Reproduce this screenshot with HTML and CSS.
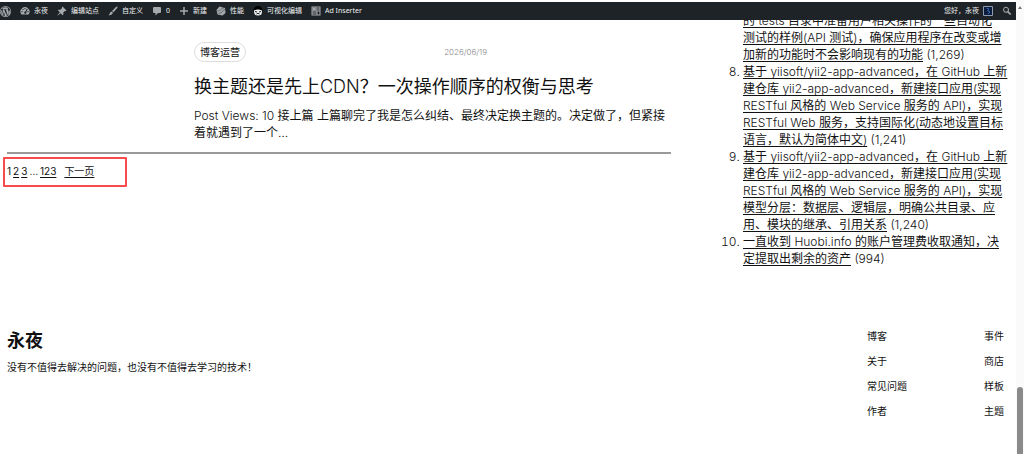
FILE: index.html
```html
<!DOCTYPE html>
<html lang="zh-CN">
<head>
<meta charset="utf-8">
<title>永夜</title>
<link rel="stylesheet" href="styles.css">
</head>
<body>
<div class="window">
<div class="page">
  <nav class="adminbar" aria-label="工具栏">
    <a class="item item-logo" href="#" aria-label="WordPress"><svg class="icon" viewBox="0 0 20 20"><path fill-rule="evenodd" d="M10 0a10 10 0 1 1 0 20a10 10 0 0 1 0-20zm0 1.200a8.800 8.800 0 1 0 0 17.600a8.800 8.800 0 0 0 0-17.600zM2.800 6.800l4 10.700A8 8 0 0 1 2.800 6.800zM3.500 5.500A8 8 0 0 1 15.300 4c-2 .4-1.500 2.200-.4 3.800c1.400 2.200.6 4.200 0 6.100l-1 2.800L10.700 7l1.300-.2V6H6.700v.8l1.300.2 1.400 3.800-2 5.700L4.500 7l1.200-.2V5.500zM10.200 11l2.600 6.800q-2.300.8-4.800.2zM17.200 6.500a8 8 0 0 1-3 10.500l2.500-7q.6-2 .5-3.500z"/></svg></a>
    <a class="item" href="#"><svg class="icon" viewBox="0 0 20 20"><path fill-rule="evenodd" d="M3 17a9 9 0 1 1 14 0zM9 4h2v2.500H9zM4.500 6.500l1.500-1 1.500 1.800L6 8.500zM2.800 10.500h2.500v2H2.800zM14.700 10.500h2.500v2h-2.500zM13.500 5.500L11 11a2.200 2.200 0 1 0 1.500 1l3-5.500z"/></svg>永夜</a>
    <a class="item" href="#"><svg class="icon" viewBox="0 0 20 20"><path d="M11 1l8 8-1.500 1.200-1.500-.4-3.500 3.400.3 3.800-1.500 1.300-4-4L1.500 19 1 18.500l4.700-5.800-4-4L3 7.300l3.800.3 3.400-3.500-.5-1.600z"/></svg>编辑站点</a>
    <a class="item" href="#"><svg class="icon" viewBox="0 0 20 20"><path d="M18.500 1.200c1 .8.400 2-.5 3.200l-7 8.100-3-2.600 7.500-7.500c1-1 2-2 3-1.200zM6.800 11l3 2.600c-.5 3.700-4.300 5-8.800 4.700 2.700-1.200 2.200-5.500 5.800-7.300z"/></svg>自定义</a>
    <a class="item" href="#" aria-label="0 条评论"><svg class="icon" viewBox="0 0 20 20"><path d="M4 2h12q2 0 2 2v8q0 2-2 2h-4l-5 5v-5H4q-2 0-2-2V4q0-2 2-2z"/></svg>0</a>
    <a class="item" href="#"><svg class="icon" viewBox="0 0 20 20"><path d="M8.500 2h3v6.500H18v3h-6.500V18h-3v-6.500H2v-3h6.500z"/></svg>新建</a>
    <a class="item" href="#"><svg class="icon" viewBox="0 0 20 20"><path d="M7 1l11 3 1 10-6 5-10-2L1 8z"/><path class="ink thin" d="M3 10q5 1 7-3t6-3M5 15q6 0 8-4t5-4"/></svg>性能</a>
    <a class="item" href="#"><svg class="icon" viewBox="0 0 20 20"><circle class="black" cx="10" cy="9" r="9"/><path class="white" d="M2 9q8-4 16 0v3q0 7-8 7t-8-7z"/><path class="ink" d="M4 11l4 1M16 11l-4 1M7 16q3-3 6 0"/></svg>可视化编辑</a>
    <a class="item" href="#"><svg class="icon" viewBox="0 0 20 20"><path fill-rule="evenodd" d="M1 1h18v18H1zM3 3v6h6V3zM11 3v2h6V3zM11 7v2h6V7zM3 11v2h8v-2zM3 15v2h8v-2zM13 11v6h4v-6z"/><path d="M3 3h6v6H3z"/></svg>Ad Inserter</a>
    <a class="item item-user" href="#">您好，永夜<svg class="icon" viewBox="0 0 20 20"><path class="frame" d="M1 1h18v18H1z"/><path class="figure" d="M7 4l5 2-3 4 5 2-4 4"/></svg></a>
    <button class="search" type="button" aria-label="搜索"><svg class="icon" viewBox="0 0 20 20"><path fill-rule="evenodd" d="M8 1.500a6 6 0 0 1 5.200 9l5.300 5.300-2.400 2.400-5.300-5.300A6 6 0 1 1 8 1.500zm0 2.200a3.900 3.900 0 1 0 0 7.800a3.900 3.900 0 0 0 0-7.800z"/></svg></button>
  </nav>

  <div class="columns">
    <main class="posts">
      <article class="post">
        <div class="meta"><a class="tag" href="#">博客运营</a><time class="date" datetime="2026-06-19">2026/06/19</time></div>
        <h2 class="title"><a href="#">换主题还是先上CDN？一次操作顺序的权衡与思考</a></h2>
        <p class="excerpt">Post Views: 10 接上篇 上篇聊完了我是怎么纠结、最终决定换主题的。决定做了，但紧接着就遇到了一个…</p>
      </article>
      <nav class="pagination" aria-label="分页">
        <span>1</span><a href="#">2</a><a href="#">3</a><span>…</span><a href="#">123</a><a class="next" href="#">下一页</a>
        <span class="highlight"></span>
      </nav>
    </main>
    <aside class="sidebar">
      <ol class="popular" start="7">
        <li class="continued"><a href="#">的 tests 目录中准备用户相关操作的一些自动化<br>测试的样例(API 测试)，确保应用程序在改变或增<br>加新的功能时不会影响现有的功能</a> (1,269)</li>
        <li><a href="#">基于 yiisoft/yii2-app-advanced，在 GitHub 上新<br>建仓库 yii2-app-advanced，新建接口应用(实现<br>RESTful 风格的 Web Service 服务的 API)，实现<br>RESTful Web 服务，支持国际化(动态地设置目标<br>语言，默认为简体中文)</a> (1,241)</li>
        <li><a href="#">基于 yiisoft/yii2-app-advanced，在 GitHub 上新<br>建仓库 yii2-app-advanced，新建接口应用(实现<br>RESTful 风格的 Web Service 服务的 API)，实现<br>模型分层：数据层、逻辑层，明确公共目录、应<br>用、模块的继承、引用关系</a> (1,240)</li>
        <li><a href="#">一直收到 Huobi.info 的账户管理费收取通知，决<br>定提取出剩余的资产</a> (994)</li>
      </ol>
    </aside>
  </div>

  <footer class="footer">
    <div class="brand">
      <h2 class="site">永夜</h2>
      <p class="tagline">没有不值得去解决的问题，也没有不值得去学习的技术！</p>
    </div>
    <nav class="links" aria-label="页脚">
      <a href="#">博客</a><a href="#">事件</a>
      <a href="#">关于</a><a href="#">商店</a>
      <a href="#">常见问题</a><a href="#">样板</a>
      <a href="#">作者</a><a href="#">主题</a>
    </nav>
  </footer>
</div>
<div class="scrollbar"><span class="arrow"></span><span class="thumb"></span></div>
</div>
</body>
</html>
```
FILE: styles.css
```css
* { box-sizing: border-box; }
body {
  margin: 0;
  background: #fff;
  color: #111;
  font: 400 12px/17px "Inter Light", "Lato Light", Inter, "Noto Sans CJK SC", sans-serif;
  overflow: hidden;
}
h2, p, ol { margin: 0; padding: 0; font-weight: inherit; }
a { color: inherit; }

.window { display: grid; grid-template-columns: 1fr 8px; min-height: 100vh; }
.page { padding-top: 2px; min-width: 0; }

.adminbar {
  position: relative;
  z-index: 1;
  display: flex;
  align-items: center;
  gap: 9px;
  height: 18px;
  padding-right: 4px;
  background: #1d2327;
  color: #f0f0f1;
  font: 400 7px/18px "Noto Sans", "Noto Sans CJK SC", sans-serif;
}
.item { display: flex; align-items: center; gap: 4px; text-decoration: none; white-space: nowrap; }
.item-user { margin-left: auto; }
.icon { display: block; width: 10px; height: 10px; fill: #a7aaad; }
.item-logo .icon { width: 11px; height: 11px; }
.icon .black { fill: #000; }
.icon .white { fill: #eee; }
.icon .ink { fill: none; stroke: #1d2327; stroke-width: 2; }
.icon .thin { stroke-width: 1; }
.icon .frame { fill: #0b1c3c; stroke: #8c9bb0; stroke-width: 2; }
.icon .figure { fill: none; stroke: #3769b5; stroke-width: 2; }
.search { padding: 0; border: 0; background: none; }

.columns {
  display: grid;
  grid-template-columns: 1fr 261px;
  gap: 72px;
  padding: 0 12px 0 7px;
}
.post {
  padding: 22px 0 11px 187px;
  border-bottom: 2px solid #999;
}
.meta { display: flex; align-items: center; justify-content: space-between; width: 293px; }
.tag {
  padding: 0 5px;
  border: 1px solid #ddd;
  border-radius: 10px;
  font-size: 10px;
  line-height: 18px;
  text-decoration: none;
}
.date { color: #888; font-size: 8px; }
.title { margin: 12px 0 7px; font-size: 18px; line-height: 26px; }
.title a { text-decoration: none; }

.pagination {
  position: relative;
  display: flex;
  gap: 2px;
  padding-top: 9px;
  font-family: Inter, "Noto Sans CJK SC", sans-serif;
  font-size: 10px;
}
.pagination a { text-underline-offset: 2px; }
.next { margin-left: 6px; }
.highlight {
  position: absolute;
  top: 3px;
  left: -4px;
  width: 124px;
  height: 30px;
  border: 2px solid #f84b4b;
  border-radius: 1px;
}

.popular { margin-top: -8px; white-space: nowrap; }
.popular a { text-underline-offset: 2px; }
.continued { list-style: none; }

.footer {
  display: flex;
  justify-content: space-between;
  padding: 61px 12px 0 7px;
  font-size: 10px;
}
.site { font-size: 18px; font-weight: 700; line-height: 26px; }
.tagline { margin-top: 5px; }
.links {
  display: grid;
  grid-template-columns: auto auto;
  column-gap: 77px;
  row-gap: 8px;
  align-content: start;
}
.links a { text-decoration: none; }

.scrollbar { position: relative; background: #fafafa; }
.arrow {
  position: absolute;
  top: 6px;
  left: 2px;
  border: 2px solid transparent;
  border-top: 0;
  border-bottom: 3px solid #777;
}
.thumb {
  position: absolute;
  inset: 387px 1px 0;
  border-radius: 3px 3px 0 0;
  background: #8a8a8a;
}
```
